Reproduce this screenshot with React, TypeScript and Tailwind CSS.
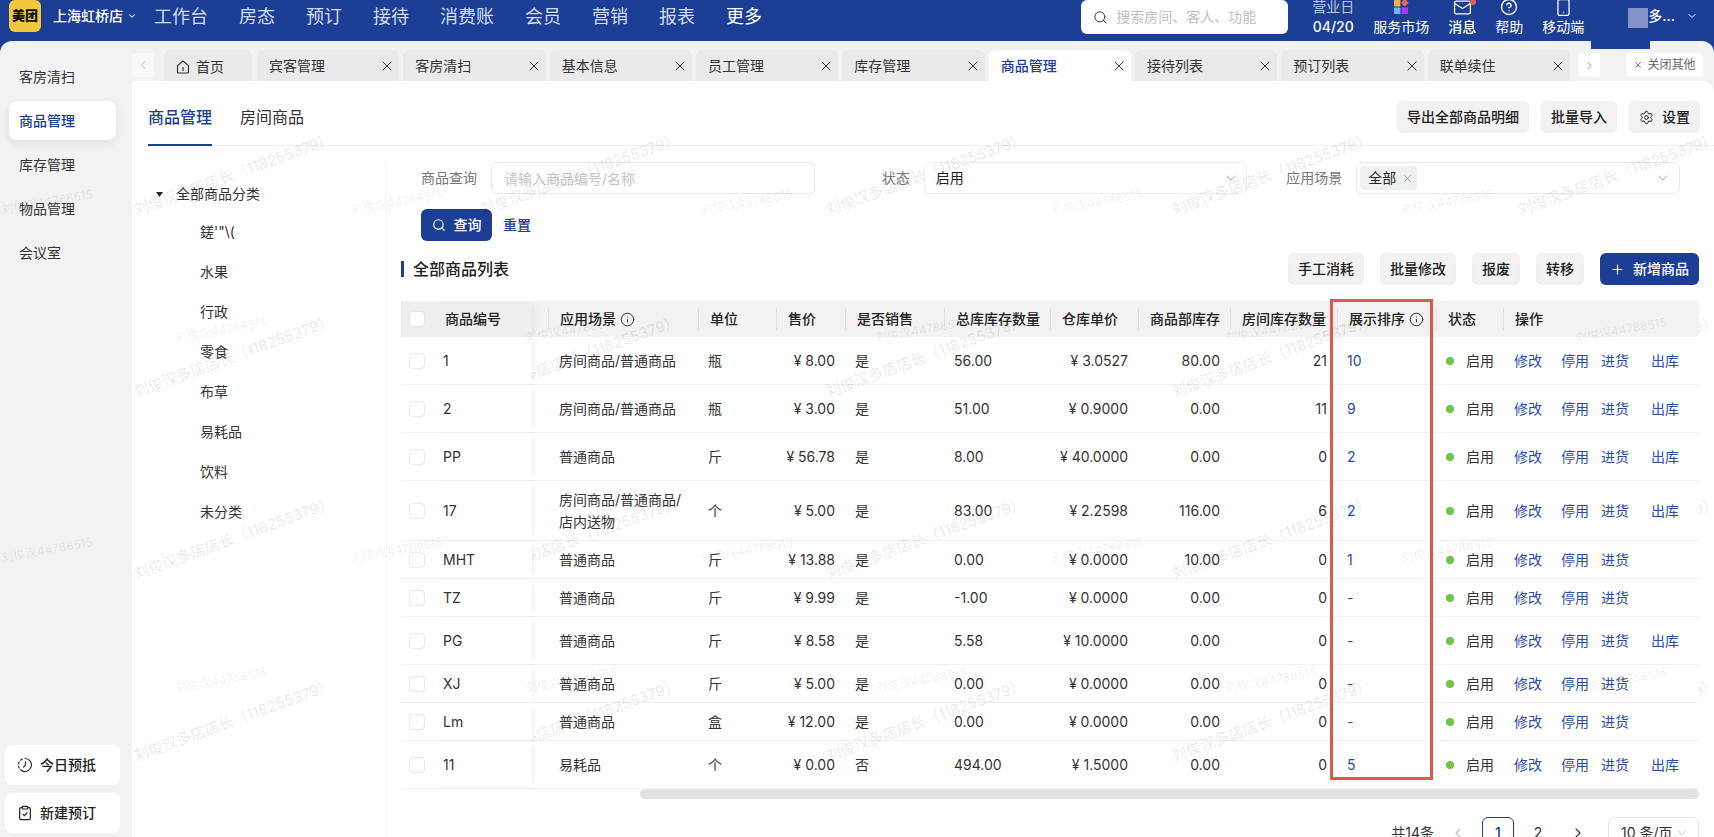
import React from "react";
import {
  ChevronDown,
  ChevronLeft,
  ChevronRight,
  CircleHelp,
  ClipboardCheck,
  Info,
  Mail,
  Plus,
  Search,
  Settings,
  Smartphone,
  X,
} from "lucide-react";

const NAV = ["工作台", "房态", "预订", "接待", "消费账", "会员", "营销", "报表"];
const SIDE = ["客房清扫", "商品管理", "库存管理", "物品管理", "会议室"];
const TABS = ["宾客管理", "客房清扫", "基本信息", "员工管理", "库存管理", "商品管理", "接待列表", "预订列表", "联单续住"];
const CATEGORIES = ["鎈'\"\\(", "水果", "行政", "零食", "布草", "易耗品", "饮料", "未分类"];

type Row = {
  id: string;
  scene: string;
  unit: string;
  price: string;
  sold: string;
  total: string;
  cost: string;
  dept: string;
  room: string;
  sort: string;
  out: boolean;
};

const r = (
  id: string, scene: string, unit: string, price: string, sold: string, total: string,
  cost: string, dept: string, room: string, sort: string, out: boolean,
): Row => ({ id, scene, unit, price, sold, total, cost, dept, room, sort, out });

const ROWS: Row[] = [
  r("1", "房间商品/普通商品", "瓶", "8.00", "是", "56.00", "3.0527", "80.00", "21", "10", true),
  r("2", "房间商品/普通商品", "瓶", "3.00", "是", "51.00", "0.9000", "0.00", "11", "9", true),
  r("PP", "普通商品", "斤", "56.78", "是", "8.00", "40.0000", "0.00", "0", "2", true),
  r("17", "房间商品/普通商品/店内送物", "个", "5.00", "是", "83.00", "2.2598", "116.00", "6", "2", true),
  r("MHT", "普通商品", "斤", "13.88", "是", "0.00", "0.0000", "10.00", "0", "1", false),
  r("TZ", "普通商品", "斤", "9.99", "是", "-1.00", "0.0000", "0.00", "0", "-", false),
  r("PG", "普通商品", "斤", "8.58", "是", "5.58", "10.0000", "0.00", "0", "-", true),
  r("XJ", "普通商品", "斤", "5.00", "是", "0.00", "0.0000", "0.00", "0", "-", false),
  r("Lm", "普通商品", "盒", "12.00", "是", "0.00", "0.0000", "0.00", "0", "-", false),
  r("11", "易耗品", "个", "0.00", "否", "494.00", "1.5000", "0.00", "0", "5", true),
];

const GREY_BTN =
  "flex h-8 items-center justify-center gap-2 rounded-md border border-[#efefef] bg-[#f2f2f2] px-[9px] text-sm font-medium text-[#222]";

function TopBar() {
  return (
    <header className="h-[41px] shrink-0 bg-[#1c3e94] text-white">
      <div className="flex h-8 items-center pl-[9px] pr-4">
        <div className="flex size-8 items-center justify-center rounded-md bg-[#f2c83f] text-[13px] font-black text-[#111]">美团</div>
        <button className="ml-3 flex items-center gap-1 text-sm font-medium">
          上海虹桥店 <ChevronDown size={10} strokeWidth={2.5} />
        </button>
        <nav className="ml-[17px] flex gap-[31px] pt-0.5 text-lg">
          {NAV.map((n) => (
            <a key={n} href="#" className="text-[#d3dcf2]">{n}</a>
          ))}
          <a href="#" className="text-white">更多</a>
        </nav>
        <label className="ml-auto mt-0.5 flex h-[34px] w-[207px] items-center gap-2 rounded-md bg-white px-3 text-[#333]">
          <Search size={15} strokeWidth={1.6} className="shrink-0" />
          <input aria-label="搜索" placeholder="搜索房间、客人、功能" className="w-full min-w-0 text-sm outline-none placeholder:text-[#c0c0c0]" />
        </label>
        <div className="ml-6 flex gap-[19px] pt-0.5 text-sm leading-5">
          <div className="flex flex-col items-center">
            <span className="text-[#b9c6e8]">营业日</span>
            <span className="font-medium">04/20</span>
          </div>
          <a href="#" className="flex flex-col items-center">
            <span className="flex h-5 items-center">
              <svg width="16" height="16" viewBox="0 0 16 16">
                <rect x="1" y="1" width="6.400" height="6.400" rx="0.600" fill="#f0b44c" />
                <rect x="9" y="1" width="5.600" height="5.600" rx="0.800" fill="#f0605c" transform="rotate(45 11.800 3.800)" />
                <rect x="1" y="8.600" width="6.400" height="6.400" rx="0.600" fill="#6ab6f8" />
                <rect x="8.600" y="8.600" width="6.400" height="6.400" rx="0.600" fill="#a23bf0" />
              </svg>
            </span>
            服务市场
          </a>
          <a href="#" className="flex flex-col items-center font-medium">
            <span className="relative flex h-5 items-center">
              <Mail size={19} strokeWidth={1.6} />
              <span className="absolute -right-1 top-0.5 size-1.5 rounded-full bg-[#ee5a52]" />
            </span>
            消息
          </a>
          <a href="#" className="flex flex-col items-center">
            <span className="flex h-5 items-center"><CircleHelp size={18} strokeWidth={1.8} /></span>
            帮助
          </a>
          <a href="#" className="flex flex-col items-center">
            <span className="flex h-5 items-center"><Smartphone size={19} strokeWidth={1.6} /></span>
            移动端
          </a>
        </div>
        <button className="ml-11 flex items-center text-sm font-medium" aria-label="账户">
          <span className="mt-1 size-5 bg-[#8494c6]" />
          多...
          <ChevronDown size={12} strokeWidth={2} className="ml-[11px]" />
        </button>
      </div>
    </header>
  );
}

function Sidebar() {
  return (
    <aside className="flex w-[132px] shrink-0 flex-col text-sm text-[#333]">
      <nav className="mt-4 flex flex-col gap-[5px] pl-[9px] pr-4">
        {SIDE.map((s) => (
          <a
            key={s}
            href="#"
            className={
              s === "商品管理"
                ? "flex h-[39px] items-center rounded-lg bg-white pl-[10px] font-medium text-[#1c3e94] shadow-[0_3px_10px_rgba(0,0,0,0.08)]"
                : "flex h-[39px] items-center pl-[10px]"
            }
          >
            {s}
          </a>
        ))}
      </nav>
      <div className="mt-auto flex flex-col gap-2 px-[5px] pb-1 pr-3">
        <button className="flex h-10 items-center gap-[7px] rounded-lg bg-white pl-3 font-medium text-[#222]">
          <svg width="16" height="16" viewBox="0 0 16 16" fill="none" stroke="#333" strokeWidth="1.2" strokeLinecap="round">
            <path d="M8 1.5A6.5 6.5 0 1 1 5.2 13.9" />
            <path d="M5.2 2.1A6.5 6.5 0 0 0 5 13.8" strokeDasharray="2 2.2" />
            <path d="M8.6 4.8 8.2 8.4 6.6 10" />
          </svg>
          今日预抵
        </button>
        <button className="flex h-10 items-center gap-[7px] rounded-lg bg-white pl-3 font-medium text-[#222]">
          <ClipboardCheck size={16} strokeWidth={1.8} />
          新建预订
        </button>
      </div>
    </aside>
  );
}

function WindowTabs() {
  return (
    <div className="flex h-10 items-end pr-[11px] text-sm text-[#333]">
      <button aria-label="向左" className="mb-1 flex h-6 w-[22px] items-center justify-center rounded bg-[#f8f8f8] text-[#bbb]">
        <ChevronLeft size={14} strokeWidth={1.6} />
      </button>
      <a href="#" className="ml-[10px] flex h-[31px] w-[88px] items-center gap-1.5 rounded-t-md bg-[#eaeaea] pl-3 pt-0.5">
        <svg width="14" height="14" viewBox="0 0 14 14" fill="none" stroke="#333" strokeWidth="1.2" strokeLinejoin="round" strokeLinecap="round">
          <path d="M1.5 5.6 7 1l5.500 4.600V12a1 1 0 0 1-1 1h-9a1 1 0 0 1-1-1Z" />
          <path d="M7 7.500v3" />
        </svg>
        首页
      </a>
      <div className="ml-[5px] flex min-w-0 flex-1 gap-1">
        {TABS.map((t) => (
          <div
            key={t}
            className={
              t === "商品管理"
                ? "flex h-[31px] min-w-0 flex-1 items-center justify-between rounded-t-md bg-white pl-3 pr-1 font-medium text-[#1c3e94]"
                : "flex h-[31px] min-w-0 flex-1 items-center justify-between rounded-t-md bg-[#eaeaea] pl-3 pr-1"
            }
          >
            <a href="#">{t}</a>
            <button aria-label={"关闭" + t}><X size={16} strokeWidth={1.5} /></button>
          </div>
        ))}
      </div>
      <button aria-label="向右" className="mb-1 ml-2 flex h-6 w-[22px] items-center justify-center rounded bg-white text-[#888]">
        <ChevronRight size={13} strokeWidth={1.6} />
      </button>
      <button className="mb-1 ml-[26px] flex h-6 w-[77px] items-center justify-center gap-1 rounded bg-white text-xs text-[#666]">
        <X size={10} strokeWidth={2} />
        关闭其他
      </button>
    </div>
  );
}

function CategoryTree() {
  return (
    <div className="mt-4 w-[255px] shrink-0 border-r border-[#f5f5f5] pt-[14px] text-sm text-[#333]">
      <button className="flex h-9 items-center gap-[13px] pl-6">
        <svg width="7" height="5" viewBox="0 0 7 5"><path d="M0 0h7L3.500 5Z" fill="#222" /></svg>
        全部商品分类
      </button>
      <ul>
        {CATEGORIES.map((c) => (
          <li key={c} className="flex h-10 items-center pl-[68px]"><a href="#">{c}</a></li>
        ))}
      </ul>
    </div>
  );
}

function Filters() {
  return (
    <form className="-ml-[19px] text-sm">
      <div className="grid grid-cols-3 pr-[19px]">
        <div className="flex items-center">
          <label htmlFor="q" className="w-[95px] shrink-0 text-right text-[#777]">商品查询</label>
          <input id="q" placeholder="请输入商品编号/名称" className="ml-[14px] h-8 min-w-0 flex-1 rounded-md border border-[#e8e8e8] px-3 outline-none placeholder:text-[#c4c4c4]" />
        </div>
        <div className="flex items-center">
          <label htmlFor="state" className="w-[95px] shrink-0 text-right text-[#777]">状态</label>
          <span className="relative ml-[14px] min-w-0 flex-1">
            <select id="state" className="h-8 w-full appearance-none rounded-md border border-[#efefef] bg-white px-[11px] text-[#222] outline-none">
              <option>启用</option>
            </select>
            <ChevronDown size={16} strokeWidth={1.4} className="absolute right-2 top-2 text-[#aaa]" />
          </span>
        </div>
        <div className="flex items-center">
          <span className="w-[95px] shrink-0 text-right text-[#777]">应用场景</span>
          <div className="ml-[14px] flex h-8 min-w-0 flex-1 items-center justify-between rounded-md border border-[#e8e8e8] bg-white pl-[3px] pr-2 text-[#222]">
            <span className="flex h-6 items-center gap-1.5 rounded bg-[#f0f0f0] pl-2 pr-1">
              全部
              <button type="button" aria-label="移除全部" className="text-[#888]"><X size={11} strokeWidth={1.6} /></button>
            </span>
            <ChevronDown size={16} strokeWidth={1.4} className="text-[#aaa]" />
          </div>
        </div>
      </div>
      <div className="mt-[15px] flex items-center gap-[11px] pl-[39px]">
        <button type="button" className="flex h-8 w-[71px] items-center justify-center gap-2 rounded-md bg-[#1c3e94] font-medium text-white">
          <Search size={14} strokeWidth={2} />
          查询
        </button>
        <button type="reset" className="font-medium text-[#1c3e94]">重置</button>
      </div>
    </form>
  );
}

function InfoMark() {
  return <Info size={15} strokeWidth={1.6} className="text-[#333]" />;
}

const TH = "relative bg-[#f2f2f2] pl-3 text-left font-medium whitespace-nowrap";
const FIXED_TH = "relative z-20 bg-[#eeeeee] text-left font-medium whitespace-nowrap";
const TD = "border-b border-[#f0f0f0] px-[10px]";
const TD_R = "border-b border-[#f0f0f0] px-[10px] text-right";
const FIXED_TD = "relative z-20 border-b border-[#f0f0f0] bg-white";
const RULE = <span className="absolute left-0 top-[7px] h-[22px] w-px bg-[#e2e2e2]" />;

function Box({ label }: { label: string }) {
  return (
    <input
      type="checkbox"
      aria-label={label}
      className="block size-4 appearance-none rounded border border-[#e8e8e8] bg-white"
    />
  );
}

function GoodsTable() {
  return (
    <table className="w-full table-fixed border-separate border-spacing-0 text-sm text-[#333]">
      <colgroup>
        <col className="w-[33px]" />
        <col className="w-[98px]" />
        <col className="w-[166px]" />
        <col className="w-[78px]" />
        <col className="w-[69px]" />
        <col className="w-[99px]" />
        <col className="w-[106px]" />
        <col className="w-[88px]" />
        <col className="w-[92px]" />
        <col className="w-[107px]" />
        <col className="w-[99px]" />
        <col className="w-[67px]" />
        <col />
      </colgroup>
      <thead>
        <tr className="h-9 text-[#222]">
          <th className={FIXED_TH + " pl-2"}><Box label="全选" /></th>
          <th className={FIXED_TH + " pl-[11px] shadow-[4px_0_6px_-3px_rgba(0,0,0,0.08)]"}>商品编号</th>
          <th className="relative bg-[#f2f2f2] pl-7 text-left font-medium">
            <span className="absolute left-4 top-[7px] h-[22px] w-px bg-[#e2e2e2]" />
            <span className="flex items-center gap-1">应用场景 <InfoMark /></span>
          </th>
          <th className={TH}>{RULE}单位</th>
          <th className={TH}>{RULE}售价</th>
          <th className={TH}>{RULE}是否销售</th>
          <th className={TH}>{RULE}总库库存数量</th>
          <th className={TH}>{RULE}仓库单价</th>
          <th className={TH}>{RULE}商品部库存</th>
          <th className={TH}>{RULE}房间库存数量</th>
          <th className={TH}>
            {RULE}
            <span className="flex items-center gap-1">展示排序 <InfoMark /></span>
            <span className="pointer-events-none absolute -left-[7px] -top-[2px] z-30 h-[481px] w-[103px] border-[3px] border-[#e2574c]" />
          </th>
          <th className={TH}>{RULE}状态</th>
          <th className="relative z-20 rounded-r bg-[#f2f2f2] pl-3 text-left font-medium">{RULE}操作</th>
        </tr>
      </thead>
      <tbody>
        {ROWS.map((row) => (
          <tr key={row.id} className={row.scene.length > 12 ? "h-[60px]" : row.out ? "h-12" : "h-[38px]"}>
            <td className={FIXED_TD + " pl-2"}><Box label={"选择" + row.id} /></td>
            <td className={FIXED_TD + " pl-[9px] shadow-[4px_0_6px_-3px_rgba(0,0,0,0.08)]"}>{row.id}</td>
            <td className="border-b border-[#f0f0f0] pl-[27px] pr-3 leading-[22px]">{row.scene}</td>
            <td className={TD}>{row.unit}</td>
            <td className={TD_R + " whitespace-nowrap"}>¥ {row.price}</td>
            <td className={TD}>{row.sold}</td>
            <td className={TD}>{row.total}</td>
            <td className={TD_R + " whitespace-nowrap"}>¥ {row.cost}</td>
            <td className={TD_R}>{row.dept}</td>
            <td className={TD_R}>{row.room}</td>
            <td className={TD}><a href="#" className="text-[#2b4ba6]">{row.sort}</a></td>
            <td className={TD}>
              <span className="flex items-center gap-3 whitespace-nowrap"><span className="size-2 shrink-0 rounded-full bg-[#6cc644]" />启用</span>
            </td>
            <td className={FIXED_TD + " pl-[11px]"}>
              <span className="grid grid-cols-[47px_40px_50px_auto] text-[#2b4ba6]">
                <a href="#">修改</a>
                <a href="#">停用</a>
                <a href="#">进货</a>
                {row.out && <a href="#">出库</a>}
              </span>
            </td>
          </tr>
        ))}
      </tbody>
    </table>
  );
}

function Pagination() {
  return (
    <div className="mt-[18px] flex items-center justify-end text-sm text-[#333]">
      <span>共14条</span>
      <button aria-label="上一页" className="ml-4 flex size-4 items-center justify-center text-[#bbb]"><ChevronLeft size={16} strokeWidth={1.6} /></button>
      <button className="ml-4 h-8 w-8 rounded-md border border-[#1c3e94] font-medium text-[#1c3e94]">1</button>
      <button className="ml-2 h-8 w-8">2</button>
      <button aria-label="下一页" className="ml-4 flex size-4 items-center justify-center"><ChevronRight size={16} strokeWidth={1.6} /></button>
      <span className="relative ml-[22px]">
        <select aria-label="每页条数" className="h-8 w-[91px] appearance-none rounded-md border border-[#e5e5e5] bg-white pl-3 outline-none">
          <option>10 条/页</option>
        </select>
        <ChevronDown size={14} strokeWidth={1.4} className="absolute right-[10px] top-[9px] text-[#bbb]" />
      </span>
    </div>
  );
}

const OWNER_MARKS = [0, 1, 2, 3].flatMap((j) => [0, 1, 2, 3, 4].map((i) => ({ left: 138 + i * 346, top: 200 + j * 182 })));
const ID_MARKS = [0, 1].flatMap((j) =>
  [0, 1, 2, 3, 4].flatMap((i) => [
    { left: 3 + i * 350, top: 202 + j * 348 },
    { left: 177 + i * 350, top: 330 + j * 350 },
  ]),
);

function Watermarks() {
  return (
    <>
      <div aria-hidden="true" className="pointer-events-none absolute inset-0 z-10 overflow-hidden">
        {OWNER_MARKS.map((p, i) => (
          <span key={i} style={p} className="absolute origin-bottom-left -rotate-20 whitespace-nowrap text-[15px] leading-5 text-black/10">
            刘俊汉多店店长（118255379）
          </span>
        ))}
      </div>
      <div aria-hidden="true" className="pointer-events-none absolute inset-0 z-30 overflow-hidden">
        {ID_MARKS.map((p, i) => (
          <span key={i} style={p} className="absolute origin-bottom-left -rotate-10 whitespace-nowrap text-xs leading-4 text-black/8">
            刘俊汉44788515
          </span>
        ))}
      </div>
    </>
  );
}

export default function App() {
  return (
    <div className="relative flex h-screen flex-col overflow-hidden bg-[#1c3e94] font-['Inter','Noto_Sans_CJK_SC',sans-serif]">
      <TopBar />
      <div className="relative flex min-h-0 flex-1 rounded-t-xl bg-[#f2f2f2]">
        <span className="absolute right-16 top-0 h-2 w-[59px] bg-[#1c3e94]" />
        <Sidebar />
        <div className="flex min-w-0 flex-1 flex-col">
          <WindowTabs />
          <main className="flex min-h-0 flex-1 flex-col rounded-tr-xl bg-white">
            <div className="ml-4 flex h-[65px] shrink-0 items-center justify-between border-b border-[#efefef] pr-[14px]">
              <div className="flex gap-7 text-base text-[#333]">
                <a href="#" className="flex h-[65px] items-center border-b-2 border-[#1c3e94] pt-[10px] font-medium text-[#1c3e94]">商品管理</a>
                <a href="#" className="flex h-[65px] items-center border-b-2 border-transparent pt-[10px]">房间商品</a>
              </div>
              <div className="flex items-center gap-3 pt-2">
                <button className={GREY_BTN}>导出全部商品明细</button>
                <button className={GREY_BTN}>批量导入</button>
                <button className={GREY_BTN}><Settings size={15} strokeWidth={1.6} />设置</button>
              </div>
            </div>
            <div className="flex min-h-0 flex-1">
              <CategoryTree />
              <div className="min-w-0 flex-1 pl-[14px] pr-[15px] pt-4">
                <Filters />
                <div className="mb-4 mt-3 flex items-center gap-4">
                  <h2 className="mr-auto border-l-[3px] border-[#1c3e94] pl-[9px] text-base leading-4 font-medium text-[#222]">全部商品列表</h2>
                  <button className={GREY_BTN}>手工消耗</button>
                  <button className={GREY_BTN}>批量修改</button>
                  <button className={GREY_BTN}>报废</button>
                  <button className={GREY_BTN}>转移</button>
                  <button className="flex h-8 items-center gap-2 rounded-md bg-[#1c3e94] px-[10px] text-sm font-medium text-white">
                    <Plus size={15} strokeWidth={1.8} />
                    新增商品
                  </button>
                </div>
                <GoodsTable />
                <div className="ml-[18.4%] h-[10px] rounded-full bg-[#e2e2e2]" />
                <Pagination />
              </div>
            </div>
          </main>
        </div>
      </div>
      <Watermarks />
    </div>
  );
}
